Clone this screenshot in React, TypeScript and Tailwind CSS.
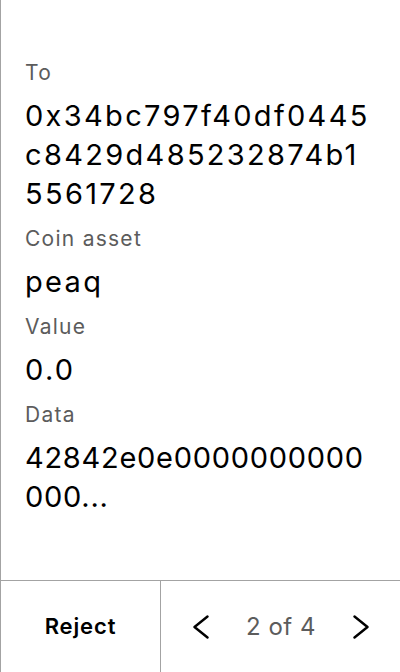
const fields = [
  { label: 'To', value: '0x34bc797f40df0445c8429d485232874b15561728', track: 'tracking-[0.08em]' },
  { label: 'Coin asset', value: 'peaq', track: 'tracking-[0.08em]' },
  { label: 'Value', value: '0.0', track: 'tracking-[0.08em]' },
  // zeros run wide in Inter, tighten so the first line holds 18 chars
  { label: 'Data', value: '42842e0e0000000000000...', track: 'tracking-[0.025em]' },
]

function Chevron({ dir }: { dir: 'left' | 'right' }) {
  return (
    <svg width="16" height="24" viewBox="0 0 16 24" fill="none" stroke="black" strokeWidth="2.4" strokeLinecap="round" strokeLinejoin="round">
      {dir === 'left' ? <polyline points="14.5,1.5 1.5,12 14.5,22.5" /> : <polyline points="1.5,1.5 14.5,12 1.5,22.5" />}
    </svg>
  )
}

export default function App() {
  return (
    <div
      className="h-[672px] w-[400px] flex flex-col bg-white border-l border-[#a3a3a3] text-black"
      style={{ fontFamily: 'Inter, "Noto Sans", sans-serif' }}
    >
      <div className="flex-1 flex flex-col pl-6 pr-[26px] pt-[59px]">
        {fields.map((f) => (
          <div key={f.label} className="flex flex-col mb-[12px]">
            <span className="text-[21px] leading-[28px] tracking-[0.06em] text-[#5c5c5c]">{f.label}</span>
            <span className={`mt-[9px] text-[29px] leading-[39px] break-all ${f.track}`}>{f.value}</span>
          </div>
        ))}
      </div>
      <div className="h-[92px] flex border-t border-[#a3a3a3]">
        <button className="w-[160px] flex items-center justify-center text-[22px] font-semibold tracking-[0.04em] border-r border-[#a3a3a3]">
          Reject
        </button>
        <div className="flex-1 flex items-center justify-between pl-[32px] pr-[31px]">
          <Chevron dir="left" />
          <span className="text-[24px] tracking-[0.02em] text-[#5c5c5c]">2 of 4</span>
          <Chevron dir="right" />
        </div>
      </div>
    </div>
  )
}
